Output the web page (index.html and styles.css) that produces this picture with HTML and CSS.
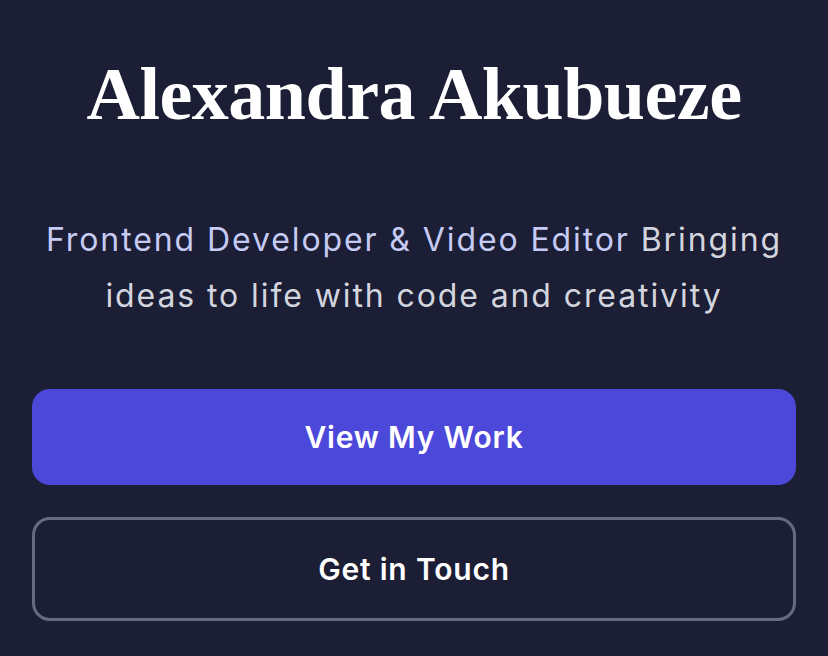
FILE: index.html
```html
<!DOCTYPE html>
<html lang="en">
<head>
<meta charset="utf-8">
<title>Alexandra Akubueze</title>
<link rel="stylesheet" href="styles.css">
</head>
<body>
<main class="hero">
  <h1 class="hero-title">Alexandra Akubueze</h1>
  <p class="hero-text"><span class="hero-role">Frontend Developer &amp; Video Editor</span> Bringing ideas to life with code and creativity</p>
  <div class="hero-actions">
    <a class="btn btn-primary" href="#work">View My Work</a>
    <a class="btn btn-outline" href="#contact">Get in Touch</a>
  </div>
</main>
</body>
</html>
```

FILE: styles.css
```css
html, body {
  margin: 0;
  padding: 0;
  background: #1b1e34;
}
body {
  font-family: Inter, "Noto Sans", sans-serif;
  color: #d1d5db;
}
.hero {
  padding: 48px 32px 0;
  display: flex;
  flex-direction: column;
  align-items: stretch;
  text-align: center;
}
.hero-title {
  margin: 0;
  font-family: "Liberation Serif", "DejaVu Serif", serif;
  font-weight: 700;
  font-size: 74px;
  line-height: 92px;
  letter-spacing: -0.5px;
  color: #ffffff;
}
.hero-text {
  margin: 72px 0 0;
  font-size: 32px;
  line-height: 56px;
  letter-spacing: 1.9px;
  color: #d3d5de;
}
.hero-role {
  color: #c6cbf5;
}
.hero-actions {
  margin-top: 65px;
  display: flex;
  flex-direction: column;
  gap: 32px;
}
.btn {
  display: flex;
  align-items: center;
  justify-content: center;
  border-radius: 18px;
  font-size: 30px;
  font-weight: 600;
  letter-spacing: 0.8px;
  color: #ffffff;
  text-decoration: none;
  box-sizing: border-box;
}
.btn-primary {
  height: 96px;
  background: #4c48da;
}
.btn-outline {
  height: 104px;
  border: 3px solid #676a7e;
  background: transparent;
}
```
